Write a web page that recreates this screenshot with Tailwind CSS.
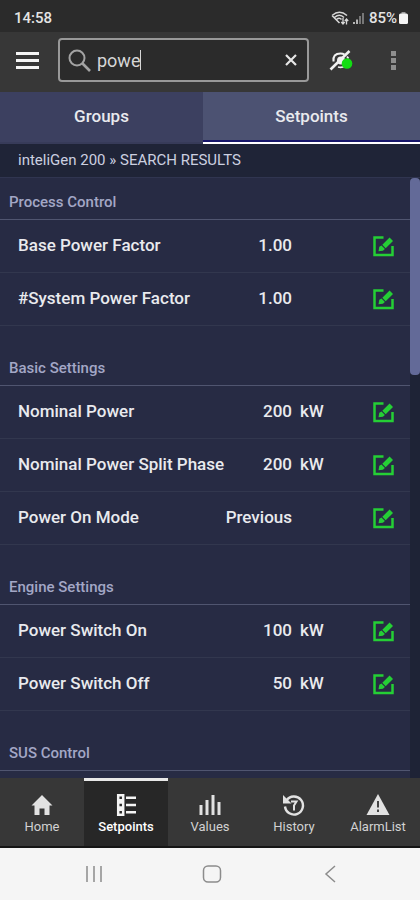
<!DOCTYPE html>
<html lang="en">
<head>
<meta charset="utf-8">
<meta name="viewport" content="width=device-width, initial-scale=1">
<title>Setpoints</title>
<script src="https://cdn.jsdelivr.net/npm/@tailwindcss/browser@4"></script>
</head>
<body class="flex h-screen flex-col overflow-hidden bg-[#272b44] font-[Roboto,sans-serif] text-[#e9eaee]">
<svg class="hidden" aria-hidden="true">
  <symbol id="edit" viewBox="0 0 21 21">
    <path d="M10.500 1.500H1.500v17.500h18V10" fill="none" stroke="currentColor" stroke-width="2.500"/>
    <path d="M9.300 8.800L16.600 1.500l3.400 3.400-7.300 7.300z" fill="currentColor"/>
    <path d="M8.500 9.600l3.400 3.400-2 1.700-4.400.5.800-4.400z" fill="currentColor"/>
  </symbol>
</svg>

<div class="flex h-8 shrink-0 items-center justify-between bg-[#2b2b2b] pt-1 pr-3 pl-3.5 text-[15px] font-medium text-[#e4e4e4]">
  <span>14:58</span>
  <div class="flex items-center gap-1">
    <svg class="h-4 w-[18px]" viewBox="0 0 18 16" fill="none" stroke="#d8d8d8" stroke-width="1.5">
      <path d="M1 5.500Q8.500-1 16 5.500M3.500 7.500Q8.500 3 13 7.500M5.500 9.500Q8.500 7 10.500 9.500M1 5.500L8.500 13"/>
      <path d="M12 8v5.500M10.300 12L12 14l1.700-2M15.500 14.500V9.500M13.800 11l1.700-2 1.700 2" stroke-width="1.300"/>
    </svg>
    <svg class="h-3 w-3" viewBox="0 0 12 12">
      <path d="M0 10h2v2H0zM3 7.500h2V12H3z" fill="#b5b5b5"/><path d="M6 4h2v8H6zM9 1h2v11H9z" fill="#777"/>
    </svg>
    <div class="flex items-center gap-0.5">
      <span>85%</span>
      <svg class="h-3 w-[9px]" viewBox="0 0 9 12"><path d="M2.500 0h4v2h-4z" fill="#999"/><rect y="1.500" width="9" height="10.500" rx="1.500" fill="#f4f4f4"/></svg>
    </div>
  </div>
</div>

<header class="flex h-15 shrink-0 items-center bg-[#373737] pr-[22px] pb-1 pl-4">
  <button aria-label="Menu" class="flex w-[23px] flex-col gap-1">
    <span class="h-[3px] bg-[#f5f5f5]"></span><span class="h-[3px] bg-[#f5f5f5]"></span><span class="h-[3px] bg-[#f5f5f5]"></span>
  </button>
  <div class="ml-[19px] flex h-11 min-w-0 flex-1 items-center rounded border-2 border-[#999] bg-[#2b2b2b] pr-2 pl-2">
    <svg class="size-[23px] shrink-0" viewBox="0 0 23 23" fill="none" stroke="#a3a3a3" stroke-width="2"><circle cx="9" cy="9" r="7.500"/><path d="M14.500 14.500L22 22" stroke-width="2.600"/></svg>
    <input type="text" value="powe" aria-label="Search setpoints" class="ml-1.5 min-w-0 bg-transparent text-[18px] text-[#d6d6d6] outline-none [field-sizing:content]">
    <span class="h-5 w-px bg-[#d6d6d6]"></span>
    <button aria-label="Clear search" class="ml-auto p-0.5"><svg class="size-3" viewBox="0 0 12 12" stroke="#e6e6e6" stroke-width="2.200"><path d="M1 1l10 10M11 1L1 11"/></svg></button>
  </div>
  <button aria-label="Connection status" class="ml-5">
    <svg class="size-6" viewBox="0 0 24 24" fill="none" stroke="#f2f2f2">
      <path d="M4.500 13.500Q3.500 5.500 11.500 5.500Q14 5.500 15.500 6.500" stroke-width="2"/>
      <circle cx="12" cy="12.500" r="4" fill="#f2f2f2" stroke="none"/>
      <path d="M1.500 21.500L20.500 3" stroke-width="2.600"/>
      <path d="M9 19q4 1 7-1M18 8.500l1.500 2" stroke-width="1.800"/>
      <circle cx="18" cy="15.500" r="5.300" fill="#12dd12" stroke="none"/>
    </svg>
  </button>
  <button aria-label="More options" class="ml-9 flex w-[9px] flex-col items-center gap-0.5">
    <span class="size-[5px] bg-[#8e8e8e]"></span><span class="size-[5px] bg-[#8e8e8e]"></span><span class="size-[5px] bg-[#8e8e8e]"></span>
  </button>
</header>

<div role="tablist" class="flex h-[52px] shrink-0 bg-[#3c4060] text-[17px] font-medium">
  <button role="tab" aria-selected="false" class="flex-[203] border-b-2 border-[#373b59]">Groups</button>
  <button role="tab" aria-selected="true" class="flex-[217] border-b-2 border-white bg-[#4c5272] shadow-[inset_0_-2px_0_#17166a]">Setpoints</button>
</div>

<div class="flex h-[34px] shrink-0 items-center border-b border-[#303550] bg-[#1f2437] pl-[18px] text-[15px] text-[#ccd0e0]">inteliGen 200 » SEARCH RESULTS</div>

<div class="flex min-h-0 flex-1 overflow-hidden">
  <main class="min-w-0 flex-1 text-[17px] font-medium">
    <section>
      <h2 class="flex h-[42px] items-end border-b border-[#505570] px-[9px] pb-1.5 text-[15px] text-[#a3a7c6]">Process Control</h2>
      <ul>
        <li class="flex h-[53px] items-center border-b border-[#32374e] pr-4 pl-[18px]"><span class="flex-1">Base Power Factor</span><span>1.00</span><span class="ml-2 w-[73px]"></span><button aria-label="Edit Base Power Factor" class="text-[#25cf35]"><svg class="size-[21px]"><use href="#edit"/></svg></button></li>
        <li class="flex h-[53px] items-center border-b border-[#32374e] pr-4 pl-[18px]"><span class="flex-1">#System Power Factor</span><span>1.00</span><span class="ml-2 w-[73px]"></span><button aria-label="Edit #System Power Factor" class="text-[#25cf35]"><svg class="size-[21px]"><use href="#edit"/></svg></button></li>
      </ul>
    </section>
    <section>
      <h2 class="flex h-15 items-end border-b border-[#505570] px-[9px] pb-1.5 text-[15px] text-[#a3a7c6]">Basic Settings</h2>
      <ul>
        <li class="flex h-[53px] items-center border-b border-[#32374e] pr-4 pl-[18px]"><span class="flex-1">Nominal Power</span><span>200</span><span class="ml-2 w-[73px]">kW</span><button aria-label="Edit Nominal Power" class="text-[#25cf35]"><svg class="size-[21px]"><use href="#edit"/></svg></button></li>
        <li class="flex h-[53px] items-center border-b border-[#32374e] pr-4 pl-[18px]"><span class="flex-1">Nominal Power Split Phase</span><span>200</span><span class="ml-2 w-[73px]">kW</span><button aria-label="Edit Nominal Power Split Phase" class="text-[#25cf35]"><svg class="size-[21px]"><use href="#edit"/></svg></button></li>
        <li class="flex h-[53px] items-center border-b border-[#32374e] pr-4 pl-[18px]"><span class="flex-1">Power On Mode</span><span>Previous</span><span class="ml-2 w-[73px]"></span><button aria-label="Edit Power On Mode" class="text-[#25cf35]"><svg class="size-[21px]"><use href="#edit"/></svg></button></li>
      </ul>
    </section>
    <section>
      <h2 class="flex h-15 items-end border-b border-[#505570] px-[9px] pb-1.5 text-[15px] text-[#a3a7c6]">Engine Settings</h2>
      <ul>
        <li class="flex h-[53px] items-center border-b border-[#32374e] pr-4 pl-[18px]"><span class="flex-1">Power Switch On</span><span>100</span><span class="ml-2 w-[73px]">kW</span><button aria-label="Edit Power Switch On" class="text-[#25cf35]"><svg class="size-[21px]"><use href="#edit"/></svg></button></li>
        <li class="flex h-[53px] items-center border-b border-[#32374e] pr-4 pl-[18px]"><span class="flex-1">Power Switch Off</span><span>50</span><span class="ml-2 w-[73px]">kW</span><button aria-label="Edit Power Switch Off" class="text-[#25cf35]"><svg class="size-[21px]"><use href="#edit"/></svg></button></li>
      </ul>
    </section>
    <section>
      <h2 class="flex h-15 items-end border-b border-[#505570] px-[9px] pb-1.5 text-[15px] text-[#a3a7c6]">SUS Control</h2>
    </section>
  </main>
  <div class="w-2.5 shrink-0 bg-[#1e2336]"><div class="h-[197px] rounded bg-[#636a98]"></div></div>
</div>

<nav class="grid h-[70px] shrink-0 grid-cols-5 border-b-2 border-[#151515] bg-[#373737] text-[13px] text-[#d2d2d2]">
  <a href="#home" class="flex flex-col items-center border-t-3 border-transparent pt-3">
    <svg class="h-6 w-6" viewBox="0 0 24 24" fill="#e2e2e2"><path d="M12 2L1.500 12.500H4.500V22H9.500V15.500H14.500V22H19.500V12.500H22.500z"/></svg><span>Home</span></a>
  <a href="#setpoints" aria-current="page" class="flex flex-col items-center border-t-3 border-[#e8e8e8] bg-[#272727] pt-3 font-medium text-white">
    <svg class="h-6 w-6" viewBox="0 0 24 24" fill="none" stroke="#f4f4f4" stroke-width="2.500"><path d="M4.200 2.200h5v5h-5zM4.200 9.500h5v5h-5zM4.200 16.800h5v5h-5zM12 4.700h10M12 12h10M12 19.300h10"/></svg><span>Setpoints</span></a>
  <a href="#values" class="flex flex-col items-center border-t-3 border-transparent pt-3">
    <svg class="h-6 w-6" viewBox="0 0 24 24" fill="#e2e2e2"><path d="M1.500 12h3v10h-3zM7.500 7h3v15h-3zM13.500 2h3v20h-3zM19.500 9h3v13h-3z"/></svg><span>Values</span></a>
  <a href="#history" class="flex flex-col items-center border-t-3 border-transparent pt-3">
    <svg class="h-6 w-6" viewBox="0 0 24 24" fill="none" stroke="#e2e2e2" stroke-width="2.400"><path d="M4.500 7.500A9 9 0 1 1 3 13.500"/><path d="M1 2v8.500h8.500z" fill="#e2e2e2" stroke="none"/><path d="M9 8.500h5.500L12 12.500v5" stroke-width="2"/></svg><span>History</span></a>
  <a href="#alarms" class="flex flex-col items-center border-t-3 border-transparent pt-3">
    <svg class="h-6 w-6" viewBox="0 0 24 24"><path d="M12 1L23.500 22H.5z" fill="#e2e2e2"/><path d="M12 8v6.500M12 16.500v2.500" stroke="#444" stroke-width="2"/></svg><span>AlarmList</span></a>
</nav>

<div class="flex h-[52px] shrink-0 items-center justify-between bg-[#f5f5f5] pr-20 pl-21">
  <button aria-label="Recent apps"><svg class="size-5" viewBox="0 0 20 20" stroke="#8c8c8c" stroke-width="1.500"><path d="M3 2v16M10 2v16M17 2v16"/></svg></button>
  <button aria-label="Home screen"><svg class="size-5" viewBox="0 0 20 20" fill="none" stroke="#8c8c8c" stroke-width="1.500"><rect x="1.500" y="2" width="17" height="16" rx="4.500"/></svg></button>
  <button aria-label="Back"><svg class="size-5" viewBox="0 0 20 20" fill="none" stroke="#8c8c8c" stroke-width="1.500"><path d="M15 2L6 10l9 8"/></svg></button>
</div>
</body>
</html>
